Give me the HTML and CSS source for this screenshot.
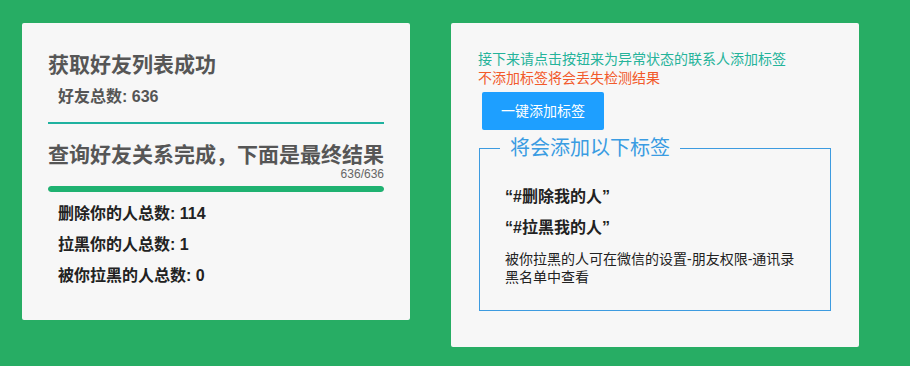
FILE: index.html
```html
<!DOCTYPE html>
<html lang="zh-CN">
<head>
<meta charset="utf-8">
<title>好友检测</title>
<link rel="stylesheet" href="styles.css">
</head>
<body>
<main class="page">
  <section class="card card-left">
    <h2 class="title">获取好友列表成功</h2>
    <p class="total">好友总数: 636</p>
    <hr class="divider">
    <h2 class="title title-second">查询好友关系完成，下面是最终结果</h2>
    <div class="progress-text">636/636</div>
    <div class="progress"><div class="progress-bar" style="width:100%"></div></div>
    <ul class="results">
      <li>删除你的人总数: 114</li>
      <li>拉黑你的人总数: 1</li>
      <li>被你拉黑的人总数: 0</li>
    </ul>
  </section>
  <section class="card card-right">
    <p class="hint hint-ok">接下来请点击按钮来为异常状态的联系人添加标签</p>
    <p class="hint hint-warn">不添加标签将会丢失检测结果</p>
    <button class="btn" type="button">一键添加标签</button>
    <fieldset class="field">
      <legend class="field-legend">将会添加以下标签</legend>
      <p class="tag">“#删除我的人”</p>
      <p class="tag">“#拉黑我的人”</p>
      <p class="desc">被你拉黑的人可在微信的设置-朋友权限-通讯录黑名单中查看</p>
    </fieldset>
  </section>
</main>
</body>
</html>
```
FILE: styles.css
```css
* { box-sizing: border-box; }
html, body { margin: 0; padding: 0; }
body {
  background: #27ad64;
  font-family: "Liberation Sans", "Noto Sans CJK SC", sans-serif;
  width: 910px;
  height: 366px;
  overflow: hidden;
}
.page {
  display: flex;
  align-items: flex-start;
  gap: 41px;
  padding: 23px 0 0 22px;
}
.card {
  background: #f7f7f7;
  border-radius: 2px;
}
.card-left {
  width: 388px;
  padding: 28px 26px 29px 26px;
}
.title {
  margin: 0;
  font-size: 21px;
  line-height: 28px;
  font-weight: bold;
  color: #565656;
}
.title-second {
  margin-top: 18px;
  line-height: 26px;
}
.total {
  margin: 6px 0 0 10px;
  font-size: 16px;
  line-height: 24px;
  font-weight: bold;
  color: #555;
}
.divider {
  margin: 13px 0 0 0;
  border: 0;
  height: 2px;
  background: #1fb2a0;
}
.progress-text {
  text-align: right;
  font-size: 12px;
  line-height: 12px;
  color: #666;
}
.progress {
  margin-top: 6px;
  height: 6px;
  border-radius: 20px;
  background: #e2e2e2;
  overflow: hidden;
}
.progress-bar {
  height: 100%;
  border-radius: 20px;
  background: #1fb271;
}
.results {
  list-style: none;
  margin: 6px 0 0 10px;
  padding: 0;
}
.results li {
  font-size: 16px;
  line-height: 31px;
  font-weight: bold;
  color: #222;
}
.card-right {
  width: 408px;
  padding: 27px 28px 36px 27px;
}
.hint {
  margin: 0;
  font-size: 14px;
  line-height: 19px;
}
.hint-ok { color: #25b39a; }
.hint-warn { color: #f25a2b; }
.btn {
  display: block;
  margin: 4px 0 0 4px;
  height: 38px;
  padding: 0 19px;
  border: 0;
  border-radius: 2px;
  background: #1e9fff;
  color: #fff;
  font-family: inherit;
  font-size: 14px;
  line-height: 38px;
}
.field {
  margin: 4px 0 0 1px;
  padding: 19px 24px 24px 25px;
  border: 1px solid #3d9be0;
  min-width: 0;
}
.field-legend {
  margin-left: -5px;
  padding: 0 10px;
  font-size: 20px;
  line-height: 28px;
  color: #3a9ce2;
}
.tag {
  margin: 0;
  font-size: 16px;
  line-height: 31px;
  font-weight: bold;
  color: #222;
}
.desc {
  margin: 7px 0 0 0;
  font-size: 14px;
  line-height: 18px;
  color: #222;
}
```
